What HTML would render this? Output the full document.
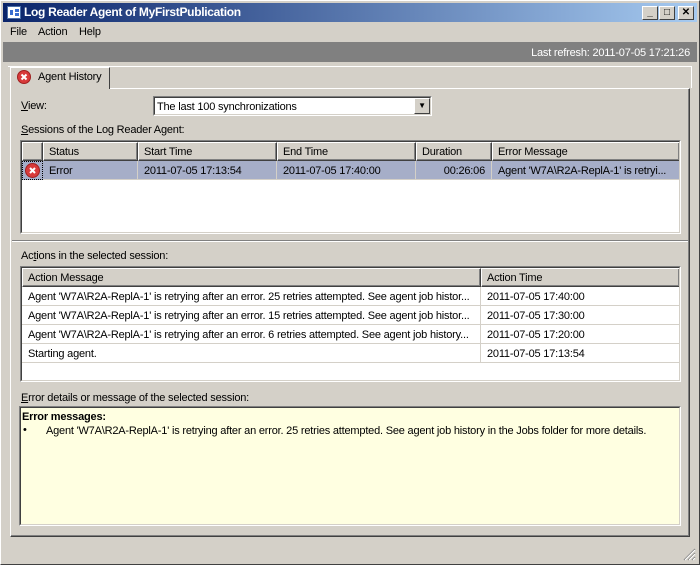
<!DOCTYPE html>
<html><head><style>
*{margin:0;padding:0;box-sizing:border-box}
body{width:700px;height:565px;background:#D4D0C8;font-family:"Liberation Sans",sans-serif;font-size:11px;letter-spacing:-0.2px;color:#000;position:relative;overflow:hidden}
.a{position:absolute}
.t{position:absolute;white-space:nowrap;line-height:13px}
.sunk{border-top:1px solid #808080;border-left:1px solid #808080;border-bottom:1px solid #fff;border-right:1px solid #fff}
.in{border-top:1px solid #404040;border-left:1px solid #404040;border-bottom:1px solid #D4D0C8;border-right:1px solid #D4D0C8;width:100%;height:100%;background:#fff;position:relative;overflow:hidden}
.hd{position:absolute;top:0;height:19px;background:#D4D0C8;border-top:1px solid #fff;border-left:1px solid #fff;border-right:1px solid #404040;border-bottom:1px solid #404040;box-shadow:inset -1px -1px 0 #808080;padding:3px 0 0 5px;white-space:nowrap}
.cell{position:absolute;height:19px;padding:4px 0 0 6px;white-space:nowrap;overflow:hidden;border-right:1px solid #D4D0C8;border-bottom:1px solid #D4D0C8}
.btn{position:absolute;top:6px;width:16px;height:14px;background:#D4D0C8;border-top:1px solid #fff;border-left:1px solid #fff;border-right:1px solid #404040;border-bottom:1px solid #404040;font-size:10px;font-weight:bold;text-align:center;line-height:11px;letter-spacing:0}
</style></head><body>
<div class="a" style="left:0;top:0;width:700px;height:565px;border:1px solid #fff;border-right-color:#404040;border-bottom-color:#404040"></div>
<div class="a" style="left:3px;top:3px;width:694px;height:19px;background:linear-gradient(90deg,#0A246A,#A6CAF0)"></div>
<div class="a" style="left:7px;top:6px;width:14px;height:13px;background:#fff;border:1px solid #4a6ea8"><div class="a" style="left:2px;top:3px;width:3px;height:5px;background:#3a6ed0"></div><div class="a" style="left:7px;top:2px;width:4px;height:3px;background:#3a6ed0"></div><div class="a" style="left:7px;top:6px;width:4px;height:3px;background:#3a6ed0"></div></div>
<div class="t" style="left:24px;top:6px;color:#fff;font-weight:bold;font-size:12px;letter-spacing:-0.3px">Log Reader Agent of MyFirstPublication</div>
<div class="btn" style="left:642px">_</div>
<div class="btn" style="left:659px">□</div>
<div class="btn" style="left:678px">✕</div>
<div class="t" style="left:10px;top:26px">File</div>
<div class="t" style="left:38px;top:26px">Action</div>
<div class="t" style="left:79px;top:26px">Help</div>
<div class="a" style="left:3px;top:42px;width:694px;height:20px;background:#808080"></div>
<div class="t" style="right:10px;top:47px;color:#fff">Last refresh: 2011-07-05 17:21:26</div>
<div class="a" style="left:8px;top:66px;width:684px;height:22px;border-top:1px solid #fff;border-right:1px solid #fff"></div>
<div class="a" style="left:10px;top:67px;width:100px;height:22px;background:#D4D0C8;border-top:1px solid #fff;border-left:1px solid #fff;border-right:1px solid #404040;z-index:2"></div>
<svg class="a" style="left:17px;top:70px;z-index:3" width="14" height="14"><circle cx="7" cy="7" r="6.5" fill="#d83a3a" stroke="#a02020"/><path d="M4.5 4.5l5 5M9.5 4.5l-5 5" stroke="#fff" stroke-width="2"/></svg>
<div class="t" style="left:38px;top:71px;z-index:3">Agent History</div>
<div class="a" style="left:10px;top:88px;width:680px;height:449px;border-top:1px solid #fff;border-left:1px solid #fff;border-right:1px solid #404040;border-bottom:1px solid #404040;box-shadow:inset -1px -1px 0 #808080"></div>
<div class="t" style="left:21px;top:100px"><u>V</u>iew:</div>
<div class="a sunk" style="left:153px;top:96px;width:279px;height:20px"><div class="in"><div class="t" style="left:2px;top:3px">The last 100 synchronizations</div>
<div class="a" style="right:0;top:0;width:16px;height:16px;background:#D4D0C8;border-top:1px solid #fff;border-left:1px solid #fff;border-right:1px solid #404040;border-bottom:1px solid #404040;font-size:8px;text-align:center;line-height:14px">▼</div></div></div>
<div class="t" style="left:21px;top:124px"><u>S</u>essions of the Log Reader Agent:</div>
<div class="a sunk" style="left:20px;top:140px;width:661px;height:94px"><div class="in">
<div class="hd" style="left:0;width:21px"></div>
<div class="hd" style="left:21px;width:95px">Status</div>
<div class="hd" style="left:116px;width:139px">Start Time</div>
<div class="hd" style="left:255px;width:139px">End Time</div>
<div class="hd" style="left:394px;width:76px">Duration</div>
<div class="hd" style="left:470px;width:188px">Error Message</div>
<div class="a" style="left:0;top:19px;width:658px;height:19px;background:#A6AEC8"></div>
<div class="a" style="left:0;top:19px;width:21px;height:19px;border:1px dotted #000"></div>
<svg class="a" style="left:3px;top:21px" width="15" height="15"><circle cx="7.5" cy="7.5" r="7" fill="#d83a3a" stroke="#a02020"/><path d="M5 5l5 5M10 5l-5 5" stroke="#fff" stroke-width="2"/></svg>
<div class="cell" style="left:21px;top:19px;width:95px">Error</div>
<div class="cell" style="left:116px;top:19px;width:139px">2011-07-05 17:13:54</div>
<div class="cell" style="left:255px;top:19px;width:139px">2011-07-05 17:40:00</div>
<div class="cell" style="left:394px;top:19px;width:76px;text-align:right;padding-right:6px">00:26:06</div>
<div class="cell" style="left:470px;top:19px;width:188px">Agent 'W7A\R2A-ReplA-1' is retryi...</div>
</div></div>
<div class="a" style="left:12px;top:240px;width:676px;height:2px;border-top:1px solid #808080;border-bottom:1px solid #fff"></div>
<div class="t" style="left:21px;top:250px">Ac<u>t</u>ions in the selected session:</div>
<div class="a sunk" style="left:20px;top:266px;width:661px;height:116px"><div class="in">
<div class="hd" style="left:0;width:459px">Action Message</div>
<div class="hd" style="left:459px;width:199px">Action Time</div>
<div class="cell" style="left:0;top:19px;width:459px">Agent 'W7A\R2A-ReplA-1' is retrying after an error. 25 retries attempted. See agent job histor...</div>
<div class="cell" style="left:459px;top:19px;width:199px">2011-07-05 17:40:00</div>
<div class="cell" style="left:0;top:38px;width:459px">Agent 'W7A\R2A-ReplA-1' is retrying after an error. 15 retries attempted. See agent job histor...</div>
<div class="cell" style="left:459px;top:38px;width:199px">2011-07-05 17:30:00</div>
<div class="cell" style="left:0;top:57px;width:459px">Agent 'W7A\R2A-ReplA-1' is retrying after an error. 6 retries attempted. See agent job history...</div>
<div class="cell" style="left:459px;top:57px;width:199px">2011-07-05 17:20:00</div>
<div class="cell" style="left:0;top:76px;width:459px">Starting agent.</div>
<div class="cell" style="left:459px;top:76px;width:199px">2011-07-05 17:13:54</div>
</div></div>
<div class="t" style="left:21px;top:392px"><u>E</u>rror details or message of the selected session:</div>
<div class="a sunk" style="left:19px;top:406px;width:662px;height:120px"><div class="in" style="background:#FFFFE1">
<div class="t" style="left:1px;top:3px;font-weight:bold">Error messages:</div>
<div class="t" style="left:2px;top:16px">•</div>
<div class="t" style="left:25px;top:17px">Agent 'W7A\R2A-ReplA-1' is retrying after an error. 25 retries attempted. See agent job history in the Jobs folder for more details.</div>
</div></div>
<svg class="a" style="left:682px;top:547px" width="14" height="14"><path d="M13 2L2 13M13 6L6 13M13 10L10 13" stroke="#808080" stroke-width="1.2"/><path d="M13 3L3 13M13 7L7 13M13 11L11 13" stroke="#fff"/></svg>
</body></html>
